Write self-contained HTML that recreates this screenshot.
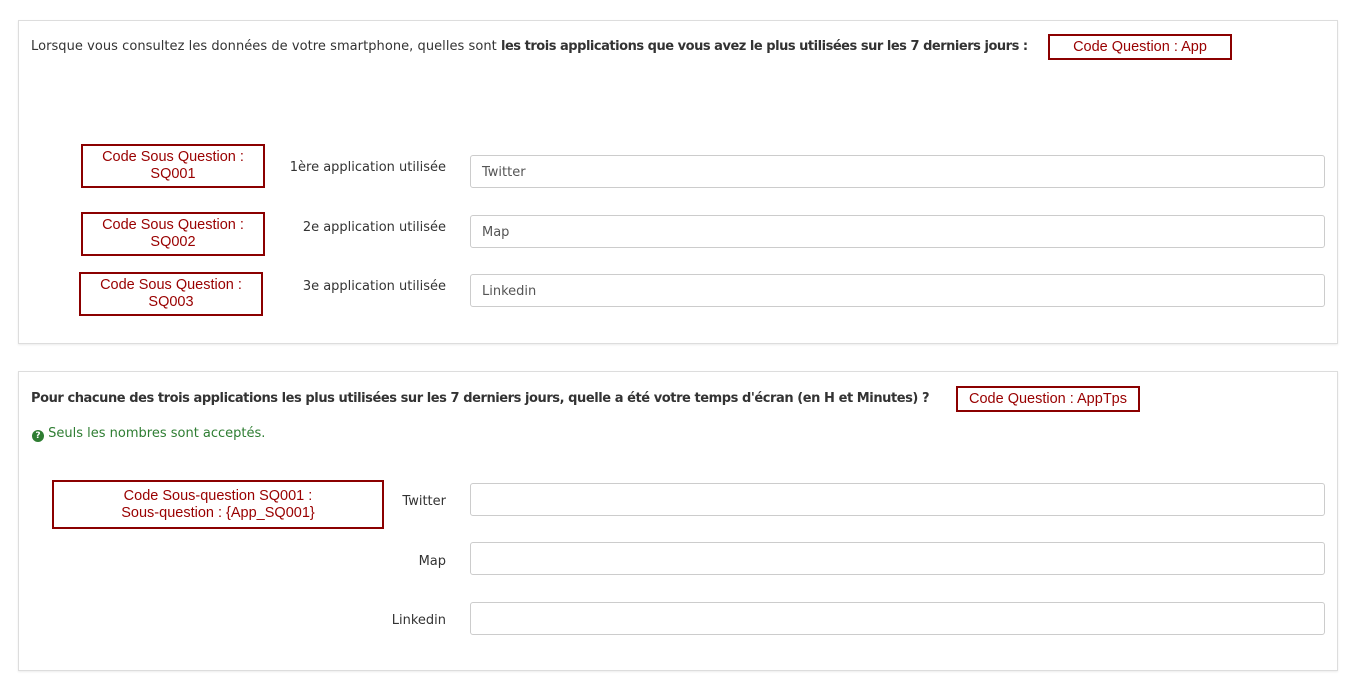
<!DOCTYPE html>
<html><head><meta charset="utf-8"><style>
body{margin:0;width:1357px;height:695px;background:#fff;position:relative;overflow:hidden;font-family:"DejaVu Sans","Liberation Sans",sans-serif;color:#333}
.p{position:absolute;left:18px;width:1318px;border:1px solid #ddd;box-shadow:0 1px 2px rgba(0,0,0,.08);background:#fff}
.a{position:absolute;white-space:nowrap}
.t{font-size:13px}
.r{position:absolute;border:2px solid #8b0000;color:#990000;font-family:"Liberation Sans",Arial,sans-serif;font-size:14.5px;text-align:center;line-height:17px;box-sizing:border-box;display:flex;align-items:center;justify-content:center}
.i{position:absolute;left:470px;width:855px;height:33px;border:1px solid #ccc;border-radius:3px;box-sizing:border-box;font-size:13px;line-height:33px;padding-left:11px;color:#555}
.l{position:absolute;right:911px;font-size:13px;white-space:nowrap}
</style></head><body>
<div class="p" style="top:20px;height:322px"></div>
<div class="p" style="top:371px;height:298px"></div>

<div class="a t" style="left:31px;top:39px"><span style="letter-spacing:0.05px">Lorsque vous consultez les données de votre smartphone, quelles sont </span><b style="letter-spacing:-0.48px">les trois applications que vous avez le plus utilisées sur les 7 derniers jours :</b></div>
<div class="r" style="left:1048px;top:34px;width:184px;height:26px">Code Question : App</div>

<div class="r" style="left:81px;top:144px;width:184px;height:44px">Code Sous Question :<br>SQ001</div>
<div class="r" style="left:81px;top:212px;width:184px;height:44px">Code Sous Question :<br>SQ002</div>
<div class="r" style="left:79px;top:272px;width:184px;height:44px">Code Sous Question :<br>SQ003</div>
<div class="l" style="top:160px">1ère application utilisée</div>
<div class="l" style="top:220px">2e application utilisée</div>
<div class="l" style="top:279px">3e application utilisée</div>
<div class="i" style="top:155px">Twitter</div>
<div class="i" style="top:215px">Map</div>
<div class="i" style="top:274px">Linkedin</div>

<div class="a t" style="left:31px;top:391px;font-weight:bold;letter-spacing:-0.44px">Pour chacune des trois applications les plus utilisées sur les 7 derniers jours, quelle a été votre temps d'écran (en H et Minutes) ?</div>
<div class="r" style="left:956px;top:386px;width:184px;height:26px">Code Question : AppTps</div>
<div class="a t" style="left:32px;top:426px;color:#2e7d32"><span style="display:inline-block;width:12px;height:12px;border-radius:50%;background:#2e7d32;color:#fff;font-size:9px;line-height:12px;text-align:center;font-weight:bold;vertical-align:-1px">?</span> Seuls les nombres sont acceptés.</div>

<div class="r" style="left:52px;top:480px;width:332px;height:49px">Code Sous-question SQ001 :<br>Sous-question : {App_SQ001}</div>
<div class="l" style="top:494px">Twitter</div>
<div class="l" style="top:554px">Map</div>
<div class="l" style="top:613px">Linkedin</div>
<div class="i" style="top:483px"></div>
<div class="i" style="top:542px"></div>
<div class="i" style="top:602px"></div>
</body></html>
